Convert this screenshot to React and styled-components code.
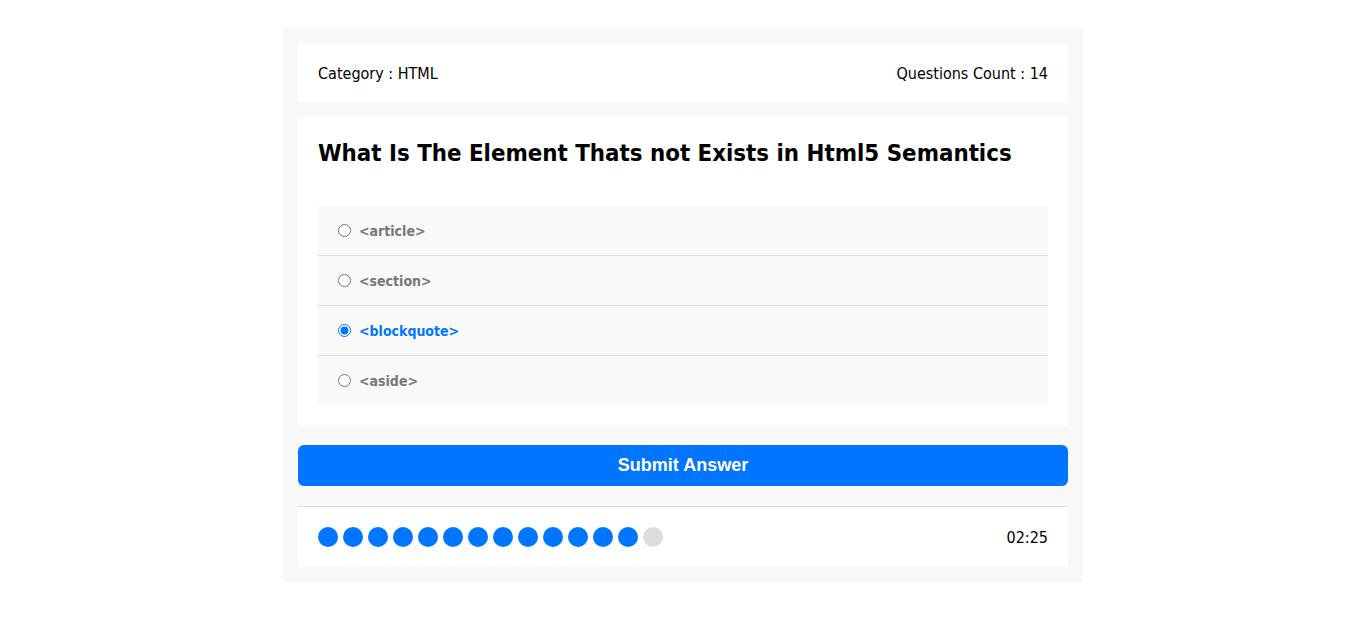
import React, { useState } from "react";
import styled, { createGlobalStyle } from "styled-components";

const Global = createGlobalStyle`
  * { box-sizing: border-box; }
  body {
    margin: 0;
    background: #fff;
    font-family: "DejaVu Sans Condensed", "DejaVu Sans", Tahoma, sans-serif;
  }
`;

const Page = styled.div`
  padding-top: 28px;
`;

const QuizApp = styled.div`
  width: 800px;
  margin: 0 auto;
  background: #f8f8f8;
  padding: 15px;
`;

const QuizInfo = styled.div`
  display: flex;
  justify-content: space-between;
  align-items: center;
  background: #fff;
  padding: 21px 20px 19px;
  font-size: 16px;
  line-height: 19px;
  color: #000;
`;

const QuizArea = styled.div`
  background: #fff;
  padding: 20px;
  margin-top: 15px;
`;

const Title = styled.h2`
  margin: 1px 0 0;
  font-size: 23.8px;
  line-height: 30px;
  font-weight: bold;
  color: #000;
`;

const Answers = styled.div`
  margin-top: 38px;
  background: #f9f9f9;
`;

const Answer = styled.label`
  display: flex;
  align-items: center;
  height: ${(p) => (p.$last ? "49px" : "50px")};
  padding-left: 15px;
  border-bottom: ${(p) => (p.$last ? "none" : "1px solid #dfdfdf")};
  cursor: pointer;
`;

const Radio = styled.input`
  width: 13px;
  height: 13px;
  margin: 0 3px 0 5px;
`;

const AnswerText = styled.span`
  margin-left: 5px;
  font-size: 14px;
  font-weight: bold;
  color: ${(p) => (p.$checked ? "#0075ff" : "#777")};
`;

const Submit = styled.button`
  display: block;
  width: 100%;
  height: 41px;
  margin-top: 20px;
  border: none;
  border-radius: 6px;
  background: #0075ff;
  color: #fff;
  font-family: "Liberation Sans", Arial, sans-serif;
  font-size: 18px;
  font-weight: bold;
  cursor: pointer;
`;

const Bottom = styled.div`
  display: flex;
  justify-content: space-between;
  align-items: center;
  margin-top: 20px;
  background: #fff;
  border-top: 1px solid #ddd;
  padding: 20px;
`;

const Bullets = styled.div`
  display: flex;
  gap: 5px;
`;

const Bullet = styled.span`
  width: 20px;
  height: 20px;
  border-radius: 50%;
  background: ${(p) => (p.$on ? "#0075ff" : "#ddd")};
`;

const Timer = styled.div`
  font-size: 16px;
  color: #000;
`;

const answers = ["<article>", "<section>", "<blockquote>", "<aside>"];

export default function App() {
  const [sel, setSel] = useState(2);
  return (
    <Page>
      <Global />
      <QuizApp>
        <QuizInfo>
          <span>Category : HTML</span>
          <span>Questions Count : 14</span>
        </QuizInfo>
        <QuizArea>
          <Title>What Is The Element Thats not Exists in Html5 Semantics</Title>
          <Answers>
            {answers.map((a, i) => (
              <Answer key={a} $last={i === answers.length - 1}>
                <Radio
                  type="radio"
                  name="question"
                  checked={sel === i}
                  onChange={() => setSel(i)}
                />
                <AnswerText $checked={sel === i}>{a}</AnswerText>
              </Answer>
            ))}
          </Answers>
        </QuizArea>
        <Submit>Submit Answer</Submit>
        <Bottom>
          <Bullets>
            {Array.from({ length: 14 }).map((_, i) => (
              <Bullet key={i} $on={i < 13} />
            ))}
          </Bullets>
          <Timer>02:25</Timer>
        </Bottom>
      </QuizApp>
    </Page>
  );
}
